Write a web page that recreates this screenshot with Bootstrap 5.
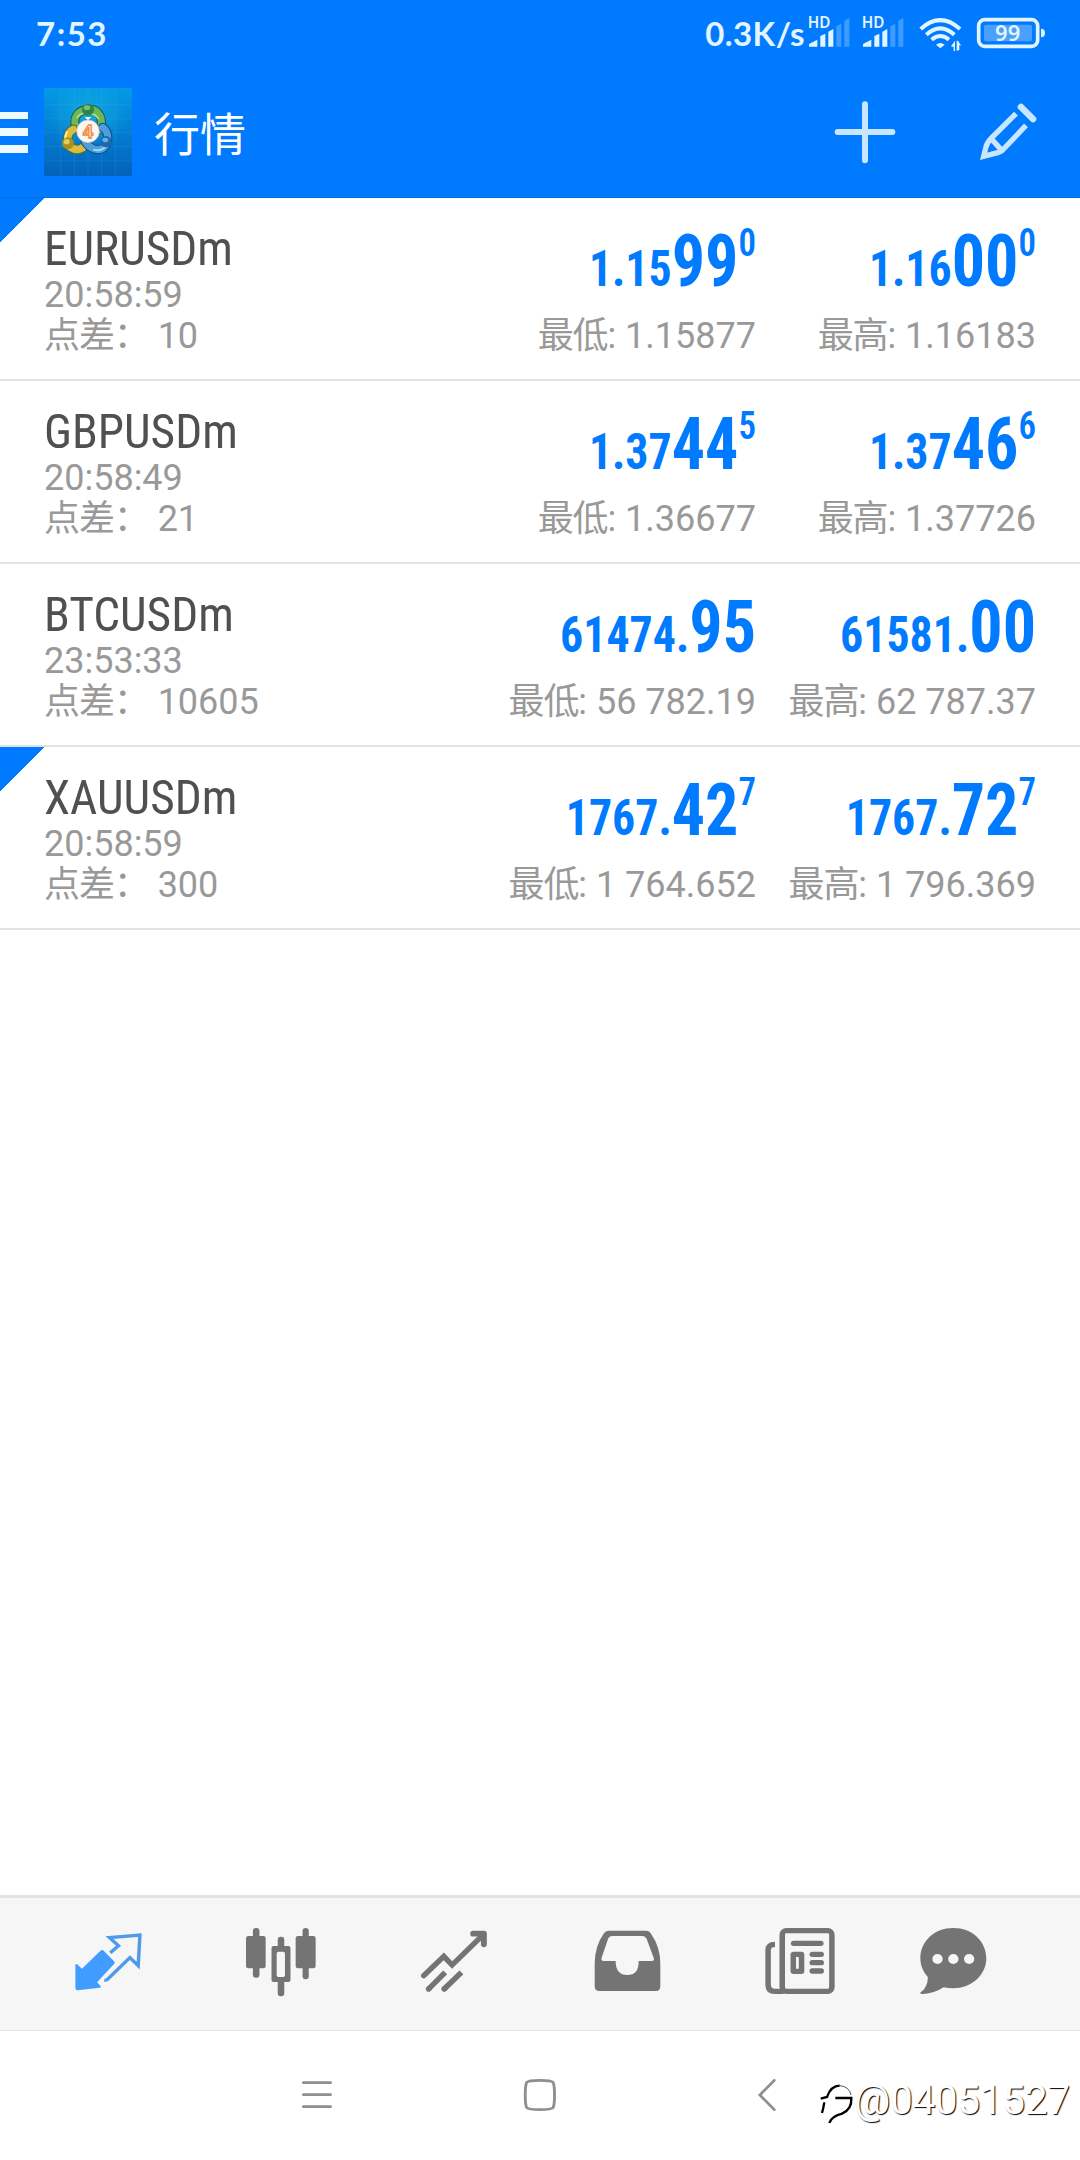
<!DOCTYPE html>
<html lang="zh-CN">
<head>
<meta charset="utf-8">
<meta name="viewport" content="width=device-width, initial-scale=1">
<title>行情</title>
<link href="https://cdn.jsdelivr.net/npm/bootstrap@5.3.0/dist/css/bootstrap.min.css" rel="stylesheet">
<style>
  body { width: 1080px; height: 2160px; overflow: hidden; font-family: Roboto, "Noto Sans CJK SC", sans-serif; background: #fff; }
  svg { display: block; flex: none; }
  .top-area { height: 198px; background: #007aff; border-bottom: 1px solid #0a6fe0; }
  .status { height: 66px; padding: 0 34px 0 36px; color: #e2f5ff; font: 700 33px/66px Lato, sans-serif; }
  .status-time { letter-spacing: 1.5px; }
  .rate { letter-spacing: .4px; }
  .signals { margin: 0 6px 0 2px; }
  .app-row { height: 132px; }
  .title-text { font-size: 46px; line-height: 60px; color: #fff; margin-left: 22px; padding-top: 5px; }
  .quote { height: 183px; border-bottom: 2px solid #e2e2e2; padding: 26px 44px 0; }
  .quote.fresh { background: linear-gradient(135deg, #007aff 31.1px, transparent 31.8px); }
  .cond { font-family: "Roboto Condensed", Roboto, sans-serif; font-stretch: condensed; }
  .sym { height: 51px; font-size: 49px; line-height: 50px; color: #505050; transform: scaleX(.966); transform-origin: left; }
  .info { height: 41px; font-size: 36px; line-height: 41px; color: #999; white-space: pre; }
  .zh { letter-spacing: -1.1px; }
  .side { width: 280px; text-align: right; }
  .price { height: 92px; line-height: 91px; font-size: 50px; font-weight: 700; color: #007aff; white-space: nowrap; transform: scaleX(.917); transform-origin: right; }
  .price span { line-height: 1; }
  .price .big { font-size: 72px; }
  .price .tick { font-size: 38px; vertical-align: 30px; font-weight: 600; }
  .tabs { height: 136px; background: #f6f6f6; border-top: 3px solid #e3e3e3; border-bottom: 1px solid #e2e2e2; padding-left: 21.5px; }
  .tabs .tab { width: 173px; }
  .tabs .tab:last-child { width: 133px; }
  .sysbar { height: 129px; padding-left: 302px; }
  .wm { right: 10px; bottom: 36px; font-size: 40px; line-height: 46px; color: #fff; text-shadow: 1px 1px 1px #000; }
</style>
</head>
<body class="d-flex flex-column">
<header class="top-area">
  <div class="status d-flex align-items-center">
    <span class="status-time me-auto">7:53</span>
    <span class="rate">0.3K/s</span>
    <svg class="signals" width="163" height="66" viewBox="350 0 489 198" fill="#e2f5ff">
      <g id="sig">
        <text x="352" y="84" font-family="Noto Sans" font-weight="600" font-size="48" textLength="68" lengthAdjust="spacingAndGlyphs">HD</text>
        <path d="M356 140v-8l25-13v21zM390 140v-32l15-7v39zM414 140V95l15-8v53z"/>
        <path d="M438 140V79l15-8v69zM462 140V62l15-8v86z" opacity=".28"/>
      </g>
      <use href="#sig" x="162"/>
      <path d="M691 87Q750 34 809 87M708 104Q750 66 792 104M724 119Q750 97 776 119" fill="none" stroke="#e2f5ff" stroke-width="12"/>
      <path d="M737 134q13-10 26 0l-13 11zM794 122v31h-4v-12l-8-2zM799 153v-31h4l10 16-6-3v16h-4z"/>
    </svg>
    <svg width="70" height="66" viewBox="858 0 210 198">
      <rect x="866" y="59" width="177" height="80" rx="18" fill="none" stroke="#e2f5ff" stroke-width="11"/>
      <rect x="882" y="74" width="144" height="50" rx="6" fill="#4aa0ff"/>
      <path d="M1053 86q12 0 12 13t-12 13z" fill="#e2f5ff"/>
      <text x="953" y="124" text-anchor="middle" font-family="Noto Sans" font-weight="600" font-size="66" fill="#e2f5ff">99</text>
    </svg>
  </div>
  <div class="app-row d-flex align-items-center">
    <svg width="28" height="42" viewBox="0 0 28 42" fill="#eef8ff"><path d="M0 1h28v7H0zM0 17h28v8H0zM0 34h28v8H0z"/></svg>
    <svg class="ms-3" width="88" height="88" viewBox="0 0 264 264">
      <defs>
        <linearGradient id="bg" x2="0" y2="1"><stop offset="0" stop-color="#049ae8"/><stop offset="1" stop-color="#0461bb"/></linearGradient>
        <radialGradient id="glow"><stop offset="0" stop-color="#16b4dc"/><stop offset="1" stop-color="#16b4dc" stop-opacity="0"/></radialGradient>
      </defs>
      <path d="M0 0h264v264H0z" fill="url(#bg)"/>
      <ellipse cx="132" cy="80" rx="120" ry="100" fill="url(#glow)" opacity=".7"/>
      <path d="M50 0v264M91 0v264M132 0v264M173 0v264M214 0v264M0 50h264M0 92h264M0 134h264M0 176h264M0 219h264" stroke="#5ccdf4" stroke-width="1.5" opacity=".25"/>
      <g fill="none" stroke-linecap="round">
        <path d="M98 122C84 92 98 68 132 64s50 34 34 62" stroke="#125c4c" stroke-width="27"/>
        <path d="M98 122C84 92 98 68 132 64s50 34 34 62" stroke="#6fb55c" stroke-width="21"/>
        <path d="M88 124c-22 10-20 44-8 54 14 9 28 8 40-2" stroke="#536c35" stroke-width="29"/>
        <path d="M88 124c-22 10-20 44-8 54 14 9 28 8 40-2" stroke="#d8bd45" stroke-width="22"/>
        <path d="M176 118c22 16 18 50 2 62-18 12-42 0-54-18" stroke="#0c5390" stroke-width="28"/>
        <path d="M176 118c22 16 18 50 2 62-18 12-42 0-54-18" stroke="#4c9edd" stroke-width="21"/>
        <path d="M100 88c8-15 48-20 63 4" stroke="#b8e080" stroke-width="5"/>
        <path d="M69 132c-8 14-5 28-1 36" stroke="#fff08a" stroke-width="6"/>
        <path d="M150 185c12 5 28 0 34-9" stroke="#9dddff" stroke-width="6"/>
      </g>
      <circle cx="132" cy="65" r="18" fill="#2d8446"/><ellipse cx="129" cy="59" rx="10" ry="7" fill="#75bf72"/>
      <circle cx="72" cy="166" r="18" fill="#a99018"/><ellipse cx="68" cy="161" rx="9" ry="8" fill="#e4cc5c"/>
      <circle cx="186" cy="161" r="17" fill="#1b68ac"/><ellipse cx="184" cy="156" rx="9" ry="7" fill="#68ace0"/>
      <path d="M122 87l10 10 10-10z" fill="#fff"/>
      <circle cx="132" cy="130" r="34" fill="#fbf6f3" stroke="#c9b9ae" stroke-width="2"/>
      <text x="132" y="149" text-anchor="middle" font-family="Liberation Sans" font-weight="700" font-size="54" fill="#fff" stroke="#ef8a36" stroke-width="4">4</text>
    </svg>
    <span class="title-text">行情</span>
    <svg class="ms-auto" width="250" height="132" viewBox="420 198 750 396" fill="none" stroke="#c9e6ff">
      <path d="M525 313v168M443 396h164" stroke-width="18" stroke-linecap="round"/>
      <path d="M993 321l36 36" stroke-width="20" stroke-linecap="round"/>
      <path d="M978 341l-74 73q-14 15-17 30l-6 25 45-12q8-3 12-7l70-74M898 410l40 44" stroke-width="16"/>
    </svg>
  </div>
</header>

<main class="flex-grow-1">
  <section class="quote fresh d-flex">
    <div class="flex-grow-1"><div class="sym cond">EURUSDm</div><div class="info">20:58:59</div><div class="info"><span class="zh">点差：</span> 10</div></div>
    <div class="side"><div class="price cond">1.15<span class="big">99</span><span class="tick">0</span></div><div class="info"><span class="zh">最低</span>: 1.15877</div></div>
    <div class="side"><div class="price cond">1.16<span class="big">00</span><span class="tick">0</span></div><div class="info"><span class="zh">最高</span>: 1.16183</div></div>
  </section>
  <section class="quote d-flex">
    <div class="flex-grow-1"><div class="sym cond">GBPUSDm</div><div class="info">20:58:49</div><div class="info"><span class="zh">点差：</span> 21</div></div>
    <div class="side"><div class="price cond">1.37<span class="big">44</span><span class="tick">5</span></div><div class="info"><span class="zh">最低</span>: 1.36677</div></div>
    <div class="side"><div class="price cond">1.37<span class="big">46</span><span class="tick">6</span></div><div class="info"><span class="zh">最高</span>: 1.37726</div></div>
  </section>
  <section class="quote d-flex">
    <div class="flex-grow-1"><div class="sym cond">BTCUSDm</div><div class="info">23:53:33</div><div class="info"><span class="zh">点差：</span> 10605</div></div>
    <div class="side"><div class="price cond">61474.<span class="big">95</span></div><div class="info"><span class="zh">最低</span>: 56 782.19</div></div>
    <div class="side"><div class="price cond">61581.<span class="big">00</span></div><div class="info"><span class="zh">最高</span>: 62 787.37</div></div>
  </section>
  <section class="quote fresh d-flex">
    <div class="flex-grow-1"><div class="sym cond">XAUUSDm</div><div class="info">20:58:59</div><div class="info"><span class="zh">点差：</span> 300</div></div>
    <div class="side"><div class="price cond">1767.<span class="big">42</span><span class="tick">7</span></div><div class="info"><span class="zh">最低</span>: 1 764.652</div></div>
    <div class="side"><div class="price cond">1767.<span class="big">72</span><span class="tick">7</span></div><div class="info"><span class="zh">最高</span>: 1 796.369</div></div>
  </section>
</main>

<nav class="tabs d-flex">
  <a class="tab d-flex justify-content-center" href="#">
    <svg width="68" height="132" viewBox="216 54 197 396" preserveAspectRatio="none">
      <path d="M292 213q5-5 10-1l30 32q4 4 0 8l-49 55 10 11q2 4-2 5l-64 8q-7 0-7-6v-70q1-5 5-2l14 13z" fill="#409cff"/>
      <path d="M321 218l24-21-26-24 88-8-5 92-24-24-66 66q-3 2-8 1" fill="none" stroke="#4f9be8" stroke-width="10"/>
    </svg></a>
  <a class="tab d-flex justify-content-center" href="#">
    <svg width="70" height="132" viewBox="715 54 203 396" preserveAspectRatio="none" fill="#747474">
      <rect x="735" y="144" width="19" height="149" rx="9"/><rect x="715" y="168" width="57" height="97" rx="7"/>
      <rect x="879" y="144" width="18" height="154" rx="9"/><rect x="859" y="168" width="58" height="97" rx="7"/>
      <rect x="807" y="170" width="19" height="40" rx="9"/><rect x="807" y="295" width="19" height="54" rx="9"/>
      <path fill-rule="evenodd" d="M795 198h43q6 0 6 6v96q0 6-6 6h-43q-6 0-6-6v-96q0-6 6-6zm14 17q-5 0-5 6v64q0 6 5 6h14q5 0 5-6v-64q0-6-5-6z"/>
    </svg></a>
  <a class="tab d-flex justify-content-center" href="#">
    <svg width="66" height="132" viewBox="1223 54 191 396" preserveAspectRatio="none" fill="none" stroke="#747474" stroke-width="16">
      <path d="M1231 287l58-58 24 26 88-89" stroke-linecap="round"/>
      <path d="M1374 161h31v32" stroke-width="17" stroke-linecap="round" stroke-linejoin="round"/>
      <path d="M1245 327l48-50M1290 327l50-50"/><path d="M1245 327l2-2M1290 327l2-2" stroke-linecap="round"/>
    </svg></a>
  <a class="tab d-flex justify-content-center" href="#">
    <svg width="67" height="132" viewBox="157 54 195 396" preserveAspectRatio="none" fill="#747474">
      <path fill-rule="evenodd" d="M199 152h111q8 0 13 9 27 40 27 90v68q0 14-13 14H172q-13 0-13-14v-68q0-52 27-91 5-8 13-8zm10 16q-8 0-11 8l-19 58q-2 9 6 9h35q0 42 34 42t33-42h38q8 0 6-9l-21-58q-4-8-11-8z"/>
    </svg></a>
  <a class="tab d-flex justify-content-center" href="#">
    <svg width="70" height="132" viewBox="656 54 203 396" preserveAspectRatio="none" fill="none" stroke="#747474" stroke-width="16">
      <rect x="706" y="152" width="144" height="182" rx="12"/>
      <path d="M685 193q-20 0-20 18v103q0 20 20 20h25"/>
      <path d="M739 190h79M793 223h26M793 248h26M793 273h26" stroke-linecap="round"/>
      <rect x="738" y="223" width="24" height="51" rx="1"/>
    </svg></a>
  <a class="tab d-flex justify-content-center" href="#">
    <svg width="67" height="132" viewBox="1102 54 195 396" preserveAspectRatio="none" fill="#747474">
      <path d="M1199 144c55 0 96 40 96 91s-44 90-96 90q-16 0-28-3-27 18-60 20c-12 0-8-6-3-8q16-14 17-42c-14-17-22-35-22-57 0-51 41-91 96-91z"/>
      <g fill="#f6f6f6"><circle cx="1153" cy="237" r="15"/><circle cx="1199" cy="237" r="15"/><circle cx="1245" cy="237" r="15"/></g>
    </svg></a>
</nav>
<footer class="sysbar d-flex align-items-center position-relative">
  <svg width="474" height="129" viewBox="118 -27 1327 387" preserveAspectRatio="none" fill="none" stroke="#8f8f8f" stroke-width="8">
    <path d="M122 128h76M122 164h76M122 200h76" stroke-linecap="round"/>
    <path d="M784 121q32 0 37 6c3 6 4 20 4 38s-1 32-4 38q-5 6-37 6t-37-6c-3-6-4-20-4-38s1-32 4-38q5-6 37-6z" />
    <path d="M1440 121l-40 44 40 44" stroke-linecap="round"/>
  </svg>
  <div class="wm position-absolute d-flex align-items-center">
    <svg width="34" height="46" viewBox="66 86 102 138" fill="none" stroke="#000" stroke-width="7">
      <path d="M68 148l19-5q12-34 38-34M112 146h48q2 34-28 47-32 8-38 28M79 159q-3 18-7 32"/>
      <path d="M126 109q28 3 33 28" stroke-width="2"/>
    </svg>
    <span>@04051527</span>
  </div>
</footer>
<script src="https://cdn.jsdelivr.net/npm/bootstrap@5.3.0/dist/js/bootstrap.bundle.min.js"></script>
</body>
</html>
